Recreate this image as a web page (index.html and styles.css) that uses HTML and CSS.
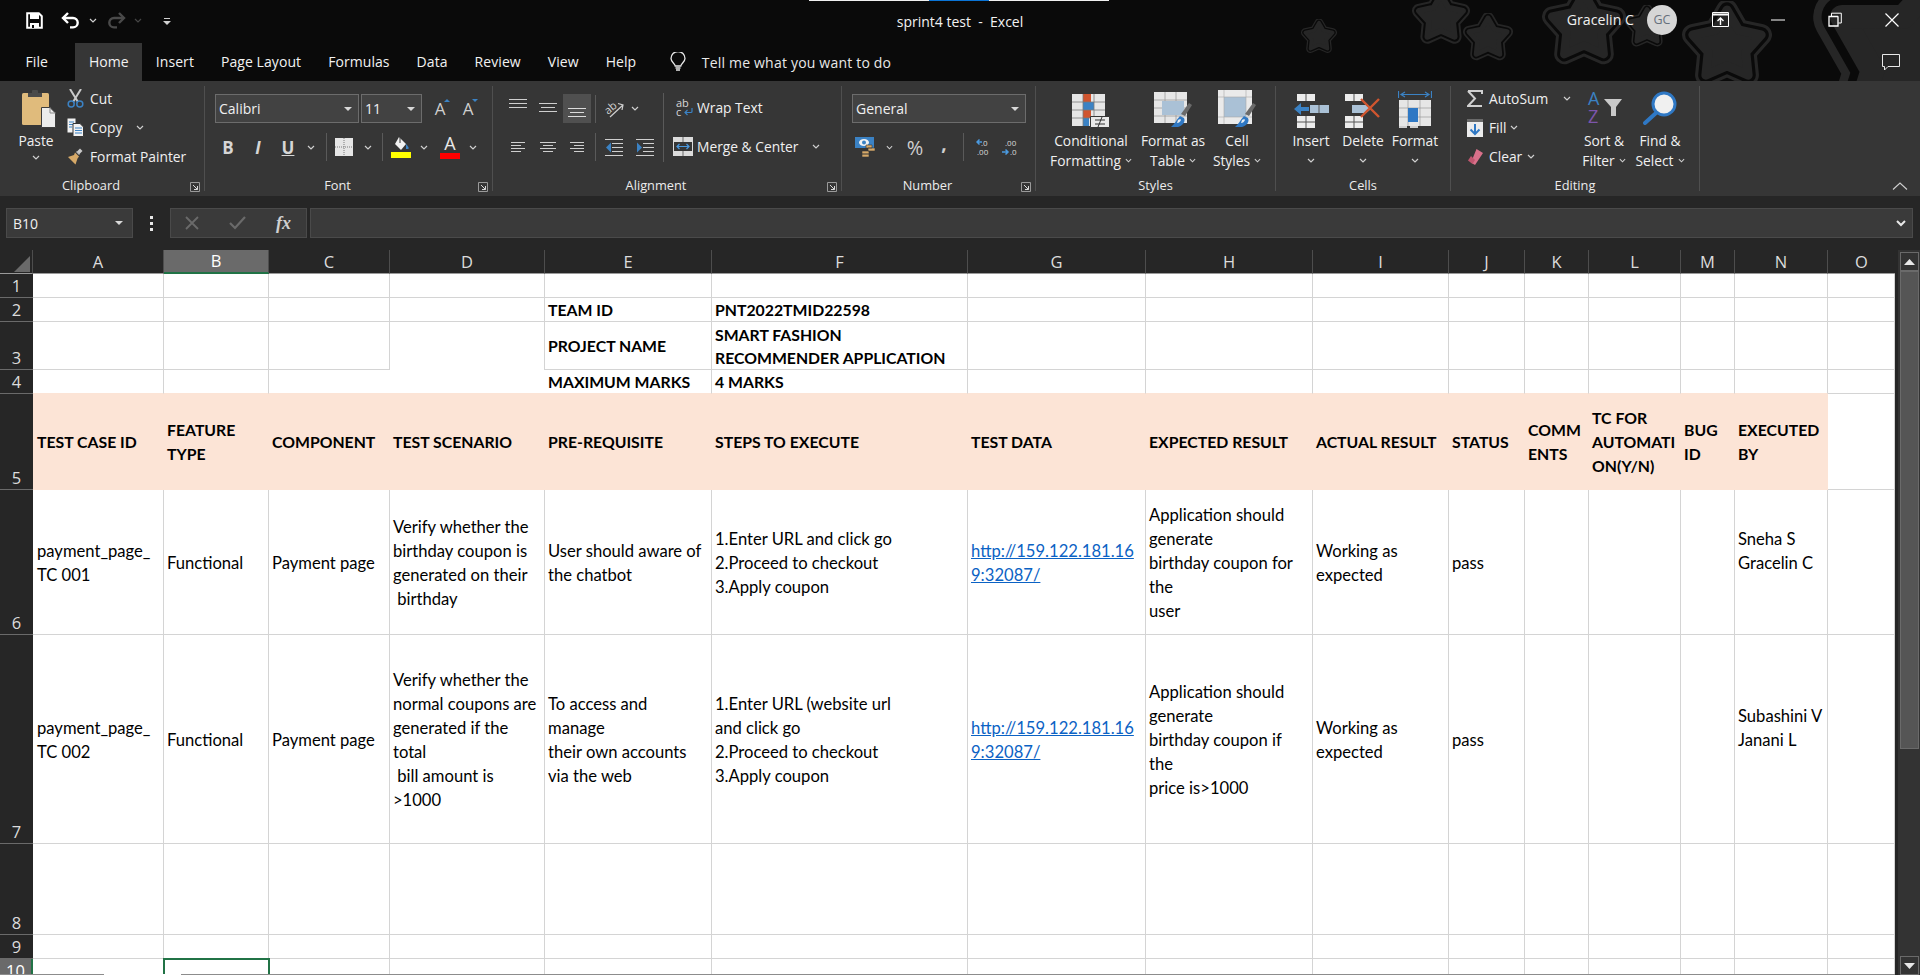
FILE: index.html
```html
<!DOCTYPE html>
<html lang="en">
<head>
<meta charset="utf-8">
<title>sprint4 test - Excel</title>
<link rel="stylesheet" href="styles.css">
</head>
<body>
<svg class="sprite" width="0" height="0">
  <symbol id="chev" viewBox="0 0 8 5"><path d="M1 1l3 3 3-3" fill="none" stroke="#d0d0d0" stroke-width="1.2"/></symbol>
  <symbol id="tri" viewBox="0 0 8 4"><path d="M0 0h8L4 4z" fill="#d8d8d8"/></symbol>
  <symbol id="launch" viewBox="0 0 10 10"><path d="M.5 9.5V.5h9v9z" fill="none" stroke="#9a9a9a"/><path d="M3 3l4.5 4.5M7.5 4v3.5H4" fill="none" stroke="#d8d8d8"/></symbol>
  <symbol id="star" viewBox="0 0 100 100"><g stroke-linejoin="round"><polygon points="50,10 62.9,32.2 88,37.6 70.9,56.8 73.5,82.4 50,72 26.5,82.4 29.1,56.8 12,37.6 37.1,32.2" fill="#262626" stroke="#262626" stroke-width="24"/><polygon points="50,10 62.9,32.2 88,37.6 70.9,56.8 73.5,82.4 50,72 26.5,82.4 29.1,56.8 12,37.6 37.1,32.2" fill="#0a0a0a" stroke="#0a0a0a" stroke-width="17"/><polygon points="50,10 62.9,32.2 88,37.6 70.9,56.8 73.5,82.4 50,72 26.5,82.4 29.1,56.8 12,37.6 37.1,32.2" fill="#262626" stroke="#262626" stroke-width="10"/></g></symbol>
  <symbol id="atop" viewBox="0 0 18 29"><path d="M0 5.5h18M0 9.5h18M0 13.5h18" stroke="#cfcfcf"/></symbol>
  <symbol id="amid" viewBox="0 0 18 29"><path d="M0 9.5h18M2 13.5h14M0 17.5h18" stroke="#cfcfcf"/></symbol>
  <symbol id="abot" viewBox="0 0 18 29"><path d="M0 14.5h18M2 18.5h14M0 22.5h18" stroke="#dcdcdc"/></symbol>
  <symbol id="hleft" viewBox="0 0 16 28"><path d="M1 9.5h14M1 12.5h10M1 15.5h14M1 18.5h10" stroke="#cfcfcf"/></symbol>
  <symbol id="hcen" viewBox="0 0 16 28"><path d="M0 9.5h16M3 12.5h10M0 15.5h16M3 18.5h10" stroke="#cfcfcf"/></symbol>
  <symbol id="hright" viewBox="0 0 16 28"><path d="M1 9.5h14M5 12.5h10M1 15.5h14M5 18.5h10" stroke="#cfcfcf"/></symbol>
</svg>

<div class="chrome">
  <svg class="stars" width="1920" height="81" aria-hidden="true">
    <use href="#star" x="1301" y="19" width="36" height="36"/>
    <use href="#star" x="1412" y="-11" width="58" height="58"/>
    <use href="#star" x="1463" y="13" width="50" height="50"/>
    <use href="#star" x="1542" y="-15" width="84" height="84"/>
    <use href="#star" x="1625" y="5" width="44" height="44"/>
    <use href="#star" x="1682" y="1" width="90" height="90"/>
    <g transform="rotate(12 1925 65)"><use href="#star" x="1805" y="-55" width="240" height="240"/></g>
  </svg>
  <div class="loadbar"><span class="load-seg"></span><span class="load-seg load-blue"></span><span class="load-seg load-end"></span></div>

  <div class="titlebar">
    <div class="qat">
      <svg class="q-save" width="17" height="17" viewBox="0 0 17 17"><path d="M1.2 1.2h11.6l3 3v11.6H1.2z" fill="none" stroke="#fff" stroke-width="2"/><path d="M4 1.5h9v5.5H4z" fill="#fff"/><path d="M4 11h9v5H4z" fill="#fff"/><path d="M6 13h2v3H6z" fill="#0a0a0a"/></svg>
      <svg class="q-undo" width="20" height="17" viewBox="0 0 20 17"><path d="M7 1L2 6l5 5" fill="none" stroke="#fff" stroke-width="2.4"/><path d="M2 6h10a4.6 4.6 0 0 1 0 9.4H9" fill="none" stroke="#fff" stroke-width="2.4"/></svg>
      <svg class="q-chev" width="8" height="5"><use href="#chev"/></svg>
      <svg class="q-redo" width="20" height="17" viewBox="0 0 20 17"><path d="M13 1l5 5-5 5" fill="none" stroke="#4a4a4a" stroke-width="2.4"/><path d="M18 6H8a4.6 4.6 0 0 0 0 9.4h3" fill="none" stroke="#4a4a4a" stroke-width="2.4"/></svg>
      <svg class="q-chev dim" width="8" height="5"><use href="#chev"/></svg>
      <svg class="q-more" width="8" height="8" viewBox="0 0 8 8"><path d="M1 .5h6" stroke="#d0d0d0"/><path d="M0 3h8L4 7z" fill="#d0d0d0"/></svg>
    </div>
    <div class="doc-title">sprint4 test&nbsp; -&nbsp; Excel</div>
    <div class="win">
      <span class="user">Gracelin C</span>
      <span class="avatar">GC</span>
      <span class="win-btn"><svg width="17" height="15" viewBox="0 0 17 15"><path d="M.5.5h16v14H.5z" fill="none" stroke="#fff"/><path d="M.5 2.5h16" stroke="#fff" stroke-width="2"/><path d="M8.5 13V6M5.5 9l3-3 3 3" fill="none" stroke="#fff" stroke-width="1.4"/></svg></span>
      <span class="win-btn"><svg width="14" height="2" viewBox="0 0 14 2"><path d="M0 1h14" stroke="#fff"/></svg></span>
      <span class="win-btn"><svg width="14" height="15" viewBox="0 0 14 15"><path d="M1 4.5h8.5a.7.7 0 0 1 .5.5v9H1z" fill="none" stroke="#fff" stroke-width="1.3"/><path d="M3.5 4V1.2h9.8V11H10.5" fill="none" stroke="#fff"/></svg></span>
      <span class="win-btn"><svg width="14" height="14" viewBox="0 0 14 14"><path d="M.5.5l13 13M13.5.5l-13 13" stroke="#fff" stroke-width="1.2"/></svg></span>
    </div>
  </div>

  <nav class="tabs">
    <span class="tab">File</span>
    <span class="tab tab-on">Home</span>
    <span class="tab">Insert</span>
    <span class="tab">Page Layout</span>
    <span class="tab">Formulas</span>
    <span class="tab">Data</span>
    <span class="tab">Review</span>
    <span class="tab">View</span>
    <span class="tab">Help</span>
    <svg class="bulb" width="16" height="20" viewBox="0 0 16 20"><path d="M5.2 14C5 11.5 1 10 1 6.5a7 7 0 0 1 14 0c0 3.500-4 5-4.200 7.500z" fill="none" stroke="#e8e8e8" stroke-width="1.300"/><path d="M5.500 16h5M6 18h4" stroke="#e8e8e8" stroke-width="1.300"/></svg>
    <span class="tell">Tell me what you want to do</span>
    <svg class="comment" width="18" height="17" viewBox="0 0 18 17"><path d="M.5.5h17v12H6l-3.500 3.500V12.500H.5z" fill="none" stroke="#e8e8e8"/></svg>
  </nav>
</div>

<div class="ribbon">
  <section class="group g-clip">
    <div class="body">
      <div class="paste">
        <svg width="34" height="38" viewBox="0 0 34 38"><rect x="0" y="3" width="27" height="32" rx="1.500" fill="#e0bb7c"/><path d="M6 7V3h4V1a1 1 0 0 1 1-1h4a1 1 0 0 1 1 1v2h4v4z" fill="#4a4a4a"/><path d="M19.500 17.500H28l5.500 5.500v14.500h-14z" fill="#ececec" stroke="#3c3c3c"/><path d="M28 17.500V23h5.500" fill="none" stroke="#8a8a8a"/></svg>
        <span class="paste-t">Paste</span>
        <svg class="paste-c" width="8" height="5"><use href="#chev"/></svg>
      </div>
      <div class="smalls">
        <div class="small"><svg class="si" width="17" height="19" viewBox="0 0 17 19"><path d="M3 0l8 13M14 0L6 13" stroke="#c9c9c9" stroke-width="2"/><circle cx="4.200" cy="15" r="3" fill="none" stroke="#3b82c4" stroke-width="1.500"/><circle cx="12.800" cy="15" r="3" fill="none" stroke="#3b82c4" stroke-width="1.500"/></svg><span>Cut</span></div>
        <div class="small"><svg class="si" width="17" height="19" viewBox="0 0 17 19"><path d="M.5.5h8v14h-8z" fill="#f2f2f2"/><path d="M2 4h5M2 6.500h5M2 9h3" stroke="#3b82c4"/><path d="M6 5.500h7l3.500 3.500v9.500H6z" fill="#f2f2f2" stroke="#363636"/><path d="M8 10h7M8 12.500h7M8 15h7" stroke="#3b82c4"/></svg><span>Copy</span><svg class="after a-copy" width="8" height="5"><use href="#chev"/></svg></div>
        <div class="small"><svg class="si" width="17" height="19" viewBox="0 0 17 19"><path d="M10 4l3 3-1 1-3-3z" fill="#b8b8b8"/><path d="M13 1.500l2.500 2.500-3 3-2.500-2.500z" fill="#c9c9c9"/><path d="M8 5.500l4 4-1.500 2-2 6-7.500-7.500 6-2z" fill="#d6a968"/></svg><span>Format Painter</span></div>
      </div>
    </div>
    <div class="label lab-l">Clipboard</div>
    <svg class="launch" width="10" height="10"><use href="#launch"/></svg>
  </section>

  <section class="group g-font">
    <div class="body column">
      <div class="row1 pad-font1">
        <div class="combo w-font"><span>Calibri</span><svg width="8" height="4"><use href="#tri"/></svg></div>
        <div class="combo w-size"><span>11</span><svg width="8" height="4"><use href="#tri"/></svg></div>
        <span class="t w28 ml4 grow">A<svg class="mini" width="6" height="3" viewBox="0 0 6 3"><path d="M0 3h6L3 0z" fill="#3b82c4"/></svg></span>
        <span class="t w28 shrink">A<svg class="mini" width="6" height="3" viewBox="0 0 6 3"><path d="M0 0h6L3 3z" fill="#3b82c4"/></svg></span>
      </div>
      <div class="row2 pad-font2">
        <span class="t w30 fb">B</span>
        <span class="t w30 fi">I</span>
        <span class="t w30 fu">U</span>
        <span class="t w16"><svg width="8" height="5"><use href="#chev"/></svg></span>
        <span class="sep ml7"></span>
        <span class="t w34"><svg width="18" height="18" viewBox="0 0 18 18"><path d="M0 0h18v18H0z" fill="#e6e6e6"/><path d="M9 0v18M0 9h18" stroke="#7a7a7a" stroke-dasharray="1 1"/></svg></span>
        <span class="t w14"><svg width="8" height="5"><use href="#chev"/></svg></span>
        <span class="sep ml7"></span>
        <span class="t w36"><svg width="20" height="22" viewBox="0 0 20 22"><path d="M8 1l7 7-5 6-6-6z" fill="#f2f2f2"/><path d="M9 1v6" stroke="#363636"/><path d="M15 8c2 2 3 3.500 2.500 5H15z" fill="#3b82c4"/><path d="M0 16h20v6H0z" fill="#ffff00"/></svg></span>
        <span class="t w10"><svg width="8" height="5"><use href="#chev"/></svg></span>
        <span class="t w32 ml5 fcolor">A</span>
        <span class="t w14"><svg width="8" height="5"><use href="#chev"/></svg></span>
      </div>
    </div>
    <div class="label lab-l">Font</div>
    <svg class="launch" width="10" height="10"><use href="#launch"/></svg>
  </section>

  <section class="group g-align">
    <div class="body">
      <div class="al-left">
        <div class="row1 pad-al">
          <span class="t w30"><svg width="18" height="29"><use href="#atop"/></svg></span>
          <span class="t w30"><svg width="18" height="29"><use href="#amid"/></svg></span>
          <span class="t w28 on"><svg width="18" height="29"><use href="#abot"/></svg></span>
          <span class="sep ml4"></span>
          <span class="t w32 ml2"><svg width="19" height="18" viewBox="0 0 19 18"><text x="0" y="11" class="svg-ab" transform="rotate(-40 7 9)">ab</text><path d="M5 17L18 5M13 3.500l5 1.500-1 5" fill="none" stroke="#cfcfcf" stroke-width="1.200"/></svg></span>
          <span class="t w10"><svg width="8" height="5"><use href="#chev"/></svg></span>
        </div>
        <div class="row2 pad-al">
          <span class="t w30"><svg width="16" height="28"><use href="#hleft"/></svg></span>
          <span class="t w30"><svg width="16" height="28"><use href="#hcen"/></svg></span>
          <span class="t w28"><svg width="16" height="28"><use href="#hright"/></svg></span>
          <span class="sep ml4"></span>
          <span class="t w32 ml2"><svg width="18" height="17" viewBox="0 0 18 17"><path d="M0 .5h18M7 4.500h11M7 8.500h11M7 12.500h11M0 16.500h18" stroke="#cfcfcf"/><path d="M6 3.500L1 8.500l5 5v-3.500h0V7z" fill="#3b82c4"/></svg></span>
          <span class="t w30"><svg width="18" height="17" viewBox="0 0 18 17"><path d="M0 .5h18M7 4.500h11M7 8.500h11M7 12.500h11M0 16.500h18" stroke="#cfcfcf"/><path d="M1 3.500l5 5-5 5z" fill="#3b82c4"/></svg></span>
        </div>
      </div>
      <div class="al-right">
        <div class="wm wm-first"><svg class="wm-i" width="20" height="18" viewBox="0 0 20 18"><text x="3" y="8" class="svg-wrap">ab</text><text x="3" y="17" class="svg-wrap">c</text><path d="M19 9v3.500a1 1 0 0 1-1 1h-6M14.500 11L12 13.500l2.500 2.500" fill="none" stroke="#3b82c4" stroke-width="1.200"/></svg><span>Wrap Text</span></div>
        <div class="wm"><svg class="wm-i" width="20" height="19" viewBox="0 0 20 19"><path d="M0 0h20v19H0z" fill="#dcdcdc"/><path d="M1 5h18v9H1z" fill="#363636"/><path d="M4 9.500h12M6.500 7L4 9.500 6.500 12M13.500 7l2.500 2.500-2.500 2.500" fill="none" stroke="#4b9ae0" stroke-width="1.200"/><path d="M10 0v5M10 14v5" stroke="#6a6a6a"/></svg><span>Merge &amp; Center</span><svg class="after a-merge" width="8" height="5"><use href="#chev"/></svg></div>
      </div>
    </div>
    <div class="label lab-l">Alignment</div>
    <svg class="launch" width="10" height="10"><use href="#launch"/></svg>
  </section>

  <section class="group g-num">
    <div class="body column">
      <div class="row1 pad-num1"><div class="combo w-gen"><span>General</span><svg width="8" height="4"><use href="#tri"/></svg></div></div>
      <div class="row2 pad-num2">
        <span class="t w22"><svg width="22" height="20" viewBox="0 0 22 20"><path d="M0 0h19v11H0z" fill="#3b82c4"/><ellipse cx="9" cy="5.500" rx="5" ry="3.500" fill="#f2f2f2"/><circle cx="9" cy="5.500" r="2" fill="#3b82c4"/><path d="M11 8h6v3h-6zM13 11h7v3h-7zM7 14h7v3H7zM7 17h7v3H7z" fill="#d6a968" stroke="#363636" stroke-width=".6"/></svg></span>
        <span class="t w24"><svg width="7" height="5"><use href="#chev"/></svg></span>
        <span class="t w28 pct">%</span>
        <span class="t w30 cma">,</span>
        <span class="sep ml4"></span>
        <span class="t w26 ml6"><svg width="15" height="18" viewBox="0 0 15 18"><text x="5" y="7.500" class="svg-dec">.0</text><text x="1" y="17" class="svg-dec">.00</text><path d="M6 4H1M3.500 1.500L1 4l2.500 2.500" fill="none" stroke="#4b9ae0" stroke-width="1.500"/></svg></span>
        <span class="t w26"><svg width="17" height="18" viewBox="0 0 17 18"><text x="4" y="7.500" class="svg-dec">.00</text><text x="9" y="17" class="svg-dec">.0</text><path d="M1 14h6M4.500 11.500L7 14l-2.500 2.500" fill="none" stroke="#4b9ae0" stroke-width="1.500"/></svg></span>
      </div>
    </div>
    <div class="label lab-l">Number</div>
    <svg class="launch" width="10" height="10"><use href="#launch"/></svg>
  </section>

  <section class="group g-styles">
    <div class="body">
      <div class="big w88">
        <div class="big-i"><svg width="38" height="34" viewBox="0 0 38 34"><path d="M0 0h33v32H0z" fill="#e6e6e6"/><path d="M11 0h8v8h-8z" fill="#d0552f"/><path d="M11 8h11v8H11z" fill="#3b82c4"/><path d="M11 16h8v8h-8z" fill="#d0552f"/><path d="M11 24h6v8h-6z" fill="#3b82c4"/><path d="M11 0v32M22 0v32M0 8h33M0 16h33M0 24h33" stroke="#7a7a7a" stroke-width=".8"/><path d="M18.500 22.500h19v11h-19z" fill="#e9e9e9" stroke="#363636"/><path d="M23 26h10M23 30h10M26 33l4-10" stroke="#333" stroke-width="1"/></svg></div>
        <div class="big-t">Conditional<br>Formatting<svg class="after a-big" width="7" height="5"><use href="#chev"/></svg></div>
      </div>
      <div class="big w76">
        <div class="big-i"><svg width="38" height="36" viewBox="0 0 38 36"><path d="M0 0h33v31H0z" fill="#e6e6e6"/><path d="M0 8h33M11 0v31M22 0v31M0 16h33M0 24h33" stroke="#9a9a9a" stroke-width=".8"/><path d="M8 9h22v14H8z" fill="#aac1d6"/><path d="M35 11l3 2-7 11-4-2z" fill="#6a6a6a"/><path d="M26 24l4 2c2 4-2 8-6 9h-7c4-3 5-7 9-11z" fill="#2f78c4"/><path d="M24 28c1-1 3-1 3 0-1 2-2 3-4 3z" fill="#e8eef4"/></svg></div>
        <div class="big-t">Format as<br>Table<svg class="after a-big" width="7" height="5"><use href="#chev"/></svg></div>
      </div>
      <div class="big w52">
        <div class="big-i"><svg width="38" height="38" viewBox="0 0 38 38"><path d="M0 0h34v34H0z" fill="#eaeaea"/><path d="M6 7h22v20H6z" fill="#aac1d6"/><path d="M6 0v34M28 0v34M0 7h34M0 27h34" stroke="#aaa" stroke-width=".6"/><path d="M35 13l3 2-7 11-4-2z" fill="#6a6a6a"/><path d="M26 26l4 2c2 4-2 8-6 9h-7c4-3 5-7 9-11z" fill="#2f78c4"/><path d="M24 30c1-1 3-1 3 0-1 2-2 3-4 3z" fill="#e8eef4"/></svg></div>
        <div class="big-t">Cell<br>Styles<svg class="after a-big" width="7" height="5"><use href="#chev"/></svg></div>
      </div>
    </div>
    <div class="label">Styles</div>
  </section>

  <section class="group g-cells">
    <div class="body">
      <div class="big w52">
        <div class="big-i"><svg width="36" height="34" viewBox="0 0 36 34"><path d="M4 0h18v7H4zM4 22h18v12H4z" fill="#ececec"/><path d="M13 0v7M13 22v12M4 28h18" stroke="#555"/><path d="M17 11h19v8H17z" fill="#aac1d6"/><path d="M26 11v8" stroke="#555"/><path d="M8 9l-7 6 7 6v-4h8v-4H8z" fill="#3b82c4"/></svg></div>
        <div class="big-t">Insert<br><svg class="paste-c" width="8" height="5"><use href="#chev"/></svg></div>
      </div>
      <div class="big w52">
        <div class="big-i"><svg width="36" height="34" viewBox="0 0 36 34"><path d="M0 0h18v7H0zM0 22h18v12H0z" fill="#ececec"/><path d="M9 0v7M9 22v12M0 28h18" stroke="#555"/><path d="M7 11h14v8H7z" fill="#aac1d6"/><path d="M21 11l5 4-5 4z" fill="#aac1d6"/><path d="M16 5l18 18M34 5L16 23" stroke="#d0552f" stroke-width="2.400"/></svg></div>
        <div class="big-t">Delete<br><svg class="paste-c" width="8" height="5"><use href="#chev"/></svg></div>
      </div>
      <div class="big w52">
        <div class="big-i"><svg width="34" height="37" viewBox="0 0 34 37"><path d="M.5 0v7M33.500 0v7M3 3.500h28M7 1L3 3.500 7 6M27 1l4 2.500L27 6" fill="none" stroke="#3b82c4" stroke-width="1.200"/><path d="M1 9h32v26H1z" fill="#e6e6e6"/><path d="M10 9v26M22 9v26M1 17h32M1 26h32" stroke="#9a9a9a" stroke-width=".7"/><path d="M10 17h10v14H10z" fill="#2f78c4"/><path d="M1 35h8v2H1zM12 35h8v2h-8z" fill="#cfcfcf"/></svg></div>
        <div class="big-t">Format<br><svg class="paste-c" width="8" height="5"><use href="#chev"/></svg></div>
      </div>
    </div>
    <div class="label">Cells</div>
  </section>

  <section class="group g-edit">
    <div class="body">
      <div class="smalls edit-col">
        <div class="small"><svg class="ei" width="16" height="17" viewBox="0 0 16 17"><path d="M1 1h14v3M15 16H1l7-7.500L1 1" fill="none" stroke="#d0d0d0" stroke-width="2"/></svg><span>AutoSum</span><svg class="after a-sum" width="8" height="5"><use href="#chev"/></svg></div>
        <div class="small"><svg class="ei" width="16" height="18" viewBox="0 0 16 18"><path d="M0 0h16v18H0z" fill="#ececec"/><path d="M0 0h16v3H0z" fill="#6a6a6a"/><path d="M8 5v10M3.500 10.500L8 15l4.500-4.500" fill="none" stroke="#2f78c4" stroke-width="2"/></svg><span>Fill</span><svg class="after a-fill" width="8" height="5"><use href="#chev"/></svg></div>
        <div class="small"><svg class="ei" width="16" height="16" viewBox="0 0 16 16"><path d="M9.500 0L16 4l-8 12-4-2.500z" fill="#d9708a"/><path d="M4 7L1 11.500 5.500 15 8 11z" fill="#c0566f"/></svg><span>Clear</span><svg class="after a-clear" width="8" height="5"><use href="#chev"/></svg></div>
      </div>
      <div class="big w56">
        <div class="big-i sort-i"><svg width="36" height="33" viewBox="0 0 36 33"><text x="2" y="13" class="svg-a">A</text><text x="2" y="31" class="svg-z">Z</text><path d="M18 7h18l-6 8v9h-5v-9z" fill="#c9c9c9"/></svg></div>
        <div class="big-t">Sort &amp;<br>Filter<svg class="after a-big" width="7" height="5"><use href="#chev"/></svg></div>
      </div>
      <div class="big w56">
        <div class="big-i sort-i"><svg width="34" height="34" viewBox="0 0 34 34"><circle cx="21" cy="13" r="11" fill="#f0f0f0" stroke="#2f78c4" stroke-width="3"/><path d="M13 22L2 32" stroke="#2f78c4" stroke-width="4" stroke-linecap="round"/></svg></div>
        <div class="big-t">Find &amp;<br>Select<svg class="after a-big" width="7" height="5"><use href="#chev"/></svg></div>
      </div>
    </div>
    <div class="label">Editing</div>
  </section>
  <svg class="collapse" width="16" height="8" viewBox="0 0 16 8"><path d="M1 7.500L8 1l7 6.500" fill="none" stroke="#cfcfcf" stroke-width="1.100"/></svg>
</div>

<div class="formula">
  <div class="namebox"><span>B10</span><svg width="8" height="4"><use href="#tri"/></svg></div>
  <div class="dots"><i></i><i></i><i></i></div>
  <div class="fbtns">
    <svg width="14" height="14" viewBox="0 0 14 14"><path d="M1 1l12 12M13 1L1 13" stroke="#6a6a6a" stroke-width="1.800"/></svg>
    <svg class="fb-ok" width="17" height="14" viewBox="0 0 17 14"><path d="M1 7l5 5L16 1" fill="none" stroke="#6a6a6a" stroke-width="2.200"/></svg>
    <span class="fx">fx</span>
  </div>
  <div class="finput"><svg width="10" height="7" viewBox="0 0 10 7"><path d="M1 1l4 4 4-4" fill="none" stroke="#e8e8e8" stroke-width="2"/></svg></div>
</div>

<div class="sheet">
  <div class="sheet-main">
    <div class="grid-clip">
      <table class="grid">
        <colgroup><col class="c0"><col class="ca"><col class="cb"><col class="cc"><col class="cd"><col class="ce"><col class="cf"><col class="cg"><col class="ch"><col class="ci"><col class="cj"><col class="ck"><col class="cl"><col class="cm"><col class="cn"><col class="co"></colgroup>
        <tr class="h-col"><th class="corner"><svg width="16" height="16" viewBox="0 0 16 16"><path d="M16 0v16H0z" fill="#6a6a6a"/></svg></th><th>A</th><th class="sel-col">B</th><th>C</th><th>D</th><th>E</th><th>F</th><th>G</th><th>H</th><th>I</th><th>J</th><th>K</th><th>L</th><th>M</th><th>N</th><th>O</th></tr>
        <tr class="short r24"><th>1</th><td></td><td></td><td></td><td></td><td></td><td></td><td></td><td></td><td></td><td></td><td></td><td></td><td></td><td></td><td></td></tr>
        <tr class="short r24"><th>2</th><td></td><td></td><td></td><td></td><td class="b">TEAM ID</td><td class="b">PNT2022TMID22598</td><td></td><td></td><td></td><td></td><td></td><td></td><td></td><td></td><td></td></tr>
        <tr class="short r48"><th>3</th><td></td><td></td><td></td><td class="nb"></td><td class="b">PROJECT NAME</td><td class="b">SMART FASHION<br>RECOMMENDER APPLICATION</td><td></td><td></td><td></td><td></td><td></td><td></td><td></td><td></td><td></td></tr>
        <tr class="short r24"><th>4</th><td class="pb"></td><td class="pb"></td><td class="pb nr"></td><td class="pb nr"></td><td class="pb b">MAXIMUM MARKS</td><td class="pb b">4 MARKS</td><td class="pb"></td><td class="pb"></td><td class="pb"></td><td class="pb"></td><td class="pb"></td><td class="pb"></td><td class="pb"></td><td class="pb"></td><td></td></tr>
        <tr class="r96 head"><th>5</th><td>TEST CASE ID</td><td>FEATURE<br>TYPE</td><td>COMPONENT</td><td>TEST SCENARIO</td><td>PRE-REQUISITE</td><td>STEPS TO EXECUTE</td><td>TEST DATA</td><td>EXPECTED RESULT</td><td>ACTUAL RESULT</td><td>STATUS</td><td>COMM<br>ENTS</td><td>TC FOR<br>AUTOMATI<br>ON(Y/N)</td><td>BUG<br>ID</td><td>EXECUTED<br>BY</td><td class="plain"></td></tr>
        <tr class="r145"><th>6</th><td>payment_page_<br>TC 001</td><td>Functional</td><td>Payment page</td><td>Verify whether the<br>birthday coupon is<br>generated on their<br>&nbsp;birthday</td><td>User should aware of<br>the chatbot</td><td>1.Enter URL and click go<br>2.Proceed to checkout<br>3.Apply coupon</td><td><a class="link" href="#">http://159.122.181.16<br>9:32087/</a></td><td>Application should<br>generate<br>birthday coupon for<br>the<br>user</td><td>Working as<br>expected</td><td>pass</td><td></td><td></td><td></td><td>Sneha S<br>Gracelin C<br>&nbsp;</td><td></td></tr>
        <tr class="r209"><th>7</th><td>payment_page_<br>TC 002</td><td>Functional</td><td>Payment page</td><td>Verify whether the<br>normal coupons are<br>generated if the<br>total<br>&nbsp;bill amount is<br>&gt;1000</td><td>To access and<br>manage<br>their own accounts<br>via the web</td><td>1.Enter URL (website url<br>and click go<br>2.Proceed to checkout<br>3.Apply coupon</td><td><a class="link" href="#">http://159.122.181.16<br>9:32087/</a></td><td>Application should<br>generate<br>birthday coupon if<br>the<br>price is&gt;1000</td><td>Working as<br>expected</td><td>pass</td><td></td><td></td><td></td><td>Subashini V<br>Janani L<br>&nbsp;</td><td></td></tr>
        <tr class="r91"><th>8</th><td></td><td></td><td></td><td></td><td></td><td></td><td></td><td></td><td></td><td></td><td></td><td></td><td></td><td></td><td></td></tr>
        <tr class="short r24"><th>9</th><td></td><td></td><td></td><td></td><td></td><td></td><td></td><td></td><td></td><td></td><td></td><td></td><td></td><td></td><td></td></tr>
        <tr class="short r24"><th class="sel-row">10</th><td></td><td class="active"></td><td></td><td></td><td></td><td></td><td></td><td></td><td></td><td></td><td></td><td></td><td></td><td></td><td></td></tr>
      </table>
    </div>
    <div class="tabline"><i class="tl-a"></i><i class="tl-b"></i><i class="tl-c"></i></div>
  </div>
  <div class="vscroll">
    <div class="sb-btn"><svg width="11" height="6" viewBox="0 0 11 6"><path d="M0 6h11L5.500 0z" fill="#e8e8e8"/></svg></div>
    <div class="sb-thumb"></div>
    <div class="sb-track"></div>
    <div class="sb-btn"><svg width="11" height="6" viewBox="0 0 11 6"><path d="M0 0h11L5.500 6z" fill="#e8e8e8"/></svg></div>
  </div>
</div>
</body>
</html>
```

FILE: styles.css
```css
* { box-sizing: border-box; }
html, body { margin: 0; height: 975px; overflow: hidden; background: #262626; }
body { font-family: "Open Sans", "Liberation Sans", sans-serif; font-size: 14px; color: #f0f0f0; width: 1920px; }
.sprite { position: absolute; }
svg { display: block; flex: none; }

/* window chrome */
.chrome { position: relative; background: #0a0a0a; height: 81px; overflow: hidden; }
.stars { position: absolute; left: 0; top: 0; }
.loadbar { position: absolute; left: 809px; top: 0; display: flex; height: 1px; }
.load-seg { width: 120px; background: #f0f0f0; }
.load-blue { background: #0a74d6; width: 60px; }
.load-end { width: 120px; }
.titlebar { position: relative; display: grid; grid-template-columns: 1fr auto 1fr; height: 43px; }
.qat { display: flex; align-items: center; height: 40px; padding-left: 26px; }
.q-undo { margin-left: 18px; }
.q-chev { margin-left: 8px; margin-right: 0; }
.q-redo { margin-left: 9px; }
.dim { opacity: .3; }
.q-more { margin-left: 21px; margin-top: 4px; }
.doc-title { line-height: 44px; color: #f2f2f2; white-space: nowrap; }
.win { display: flex; justify-content: flex-end; align-items: center; height: 39px; }
.user { margin-right: 13px; font-size: 14.2px; }
.avatar { width: 30px; height: 30px; border-radius: 50%; background: #d6d6d6; color: #66707c; font-size: 12.5px; text-align: center; line-height: 30px; margin-right: 15px; }
.win-btn { width: 57px; display: flex; justify-content: center; }
.tabs { position: relative; display: flex; align-items: center; height: 38px; padding-left: 12px; }
.tab { padding: 0 13.5px; line-height: 38px; color: #f2f2f2; letter-spacing: .07px; }
.tab-on { background: #363636; margin-left: 14px; }
.bulb { margin-left: 20px; }
.tell { margin-left: 16px; color: #e8e8e8; letter-spacing: .2px; }
.comment { margin-left: auto; margin-right: 20px; }

/* ribbon */
.ribbon { position: relative; display: flex; height: 115px; background: #363636; padding: 5px 0; font-size: 13.8px; }
.group { position: relative; display: flex; flex-direction: column; height: 105px; border-right: 1px solid #4f4f4f; flex: none; }
.g-clip { width: 205px; }
.g-font { width: 288px; }
.g-align { width: 349px; }
.g-num { width: 194px; }
.g-styles { width: 240px; padding-left: 11px; }
.g-cells { width: 175px; padding-left: 9px; }
.g-edit { width: 249px; padding-left: 16px; }
.body { display: flex; height: 90px; flex: none; }
.column { flex-direction: column; }
.label { line-height: 19px; text-align: center; font-size: 12.8px; color: #ececec; }
.lab-l { padding-right: 22px; }
.g-styles .label { margin-left: -11px; }
.g-cells .label { margin-left: -9px; }
.g-edit .label { margin-left: -16px; }
.launch { position: absolute; right: 4px; bottom: -1px; }

.paste { width: 66px; padding-top: 4px; padding-left: 12px; display: flex; flex-direction: column; align-items: center; flex: none; }
.paste-t { margin: 3px 0 0 -6px; line-height: 20px; }
.paste .paste-c { margin: 4px 0 0 -6px; }
.smalls { display: flex; flex-direction: column; margin-top: -2px; }
.small { display: flex; align-items: center; height: 29px; white-space: nowrap; }
.si { width: 17px; margin-left: 1px; margin-right: 6px; }
.ei { margin-right: 6px; }
.after { display: inline-block; }
.a-copy { margin-left: 14px; }
.a-merge { margin-left: 14px; }
.a-sum { margin-left: 15px; }
.a-fill { margin-left: 3px; }
.a-clear { margin-left: 5px; }
.a-big { margin-left: 4px; vertical-align: 3px; }
.edit-col { width: 109px; flex: none; }

.row1 { display: flex; align-items: center; height: 29px; margin-top: 8px; }
.row2 { display: flex; align-items: center; height: 28px; margin-top: 10px; }
.pad-font1 { padding-left: 10px; }
.pad-font2 { padding-left: 8px; }
.pad-al { padding-left: 10px; }
.pad-num1 { padding-left: 10px; }
.pad-num2 { padding-left: 13px; }
.combo { display: flex; align-items: center; justify-content: space-between; height: 29px; background: #424242; border: 1px solid #6c6c6c; padding: 0 6px 0 3px; font-size: 14px; flex: none; }
.w-font { width: 144px; margin-right: 2px; }
.w-size { width: 61px; padding-left: 3px; }
.w-gen { width: 174px; }
.t { display: flex; align-items: center; justify-content: center; flex: none; height: 28px; position: relative; }
.row1 .t { height: 29px; }
.w10 { width: 10px; } .w14 { width: 14px; } .w16 { width: 16px; } .w22 { width: 22px; } .w24 { width: 24px; } .w26 { width: 26px; } .w28 { width: 28px; } .w30 { width: 30px; } .w32 { width: 32px; } .w34 { width: 34px; } .w36 { width: 36px; }
.ml2 { margin-left: 2px; } .ml4 { margin-left: 4px; } .ml5 { margin-left: 5px; } .ml6 { margin-left: 6px; } .ml7 { margin-left: 7px; }
.sep { width: 1px; height: 28px; background: #5a5a5a; flex: none; }
.on { background: #505050; }
.grow, .shrink { font-size: 17px; color: #cfcfcf; }
.mini { position: absolute; left: 18px; top: 5px; }
.fb, .fi, .fu { font-size: 17px; color: #d6d6d6; font-weight: 700; }
.fi { font-style: italic; }
.fu { text-decoration: underline; }
.fcolor { font-size: 18px; line-height: 20px; color: #e8e8e8; flex-direction: column; justify-content: flex-start; }
.fcolor::after { content: ""; display: block; width: 20px; height: 6px; background: #ff0000; }
.al-left { width: 170px; flex: none; }
.al-right { position: relative; padding-left: 9px; border-left: 1px solid #5a5a5a; height: 69px; margin-top: 7px; flex: none; }
.wm { display: flex; align-items: center; height: 29px; margin-top: 10px; white-space: nowrap; }
.wm-first { margin-top: 0; }
.wm-i { margin-right: 4px; }
.pct { font-size: 20px; color: #cfcfcf; }
.cma { font-size: 19px; font-weight: 700; color: #cfcfcf; padding-bottom: 8px; }

.svg-ab { font: 400 11px "Open Sans", sans-serif; fill: #cfcfcf; }
.svg-wrap { font: 400 11px "Open Sans", sans-serif; fill: #d8d8d8; }
.svg-dec { font: 400 8px "Open Sans", sans-serif; fill: #d8d8d8; }
.svg-a { font: 400 18px "Open Sans", sans-serif; fill: #3b82c4; }
.svg-z { font: 400 18px "Open Sans", sans-serif; fill: #7c55ab; }

.big { display: flex; flex-direction: column; align-items: center; flex: none; }
.w52 { width: 52px; } .w56 { width: 56px; } .w76 { width: 76px; } .w88 { width: 88px; }
.big-i { height: 42px; display: flex; align-items: flex-end; justify-content: center; }
.sort-i { padding-bottom: 3px; }
.big-t { margin-top: 3px; line-height: 20px; text-align: center; white-space: nowrap; }
.big-t .after { display: inline; }
.big-t .paste-c { display: inline; vertical-align: 3px; }
.collapse { position: absolute; right: 12px; bottom: 6px; }

/* formula bar */
.formula { display: flex; align-items: flex-start; height: 54px; padding: 12px 7px 0 6px; background: #262626; }
.namebox { display: flex; align-items: center; justify-content: space-between; width: 127px; height: 30px; background: #3a3a3a; border: 1px solid #4a4a4a; padding: 0 9px 0 6px; font-size: 14px; }
.dots { width: 37px; height: 30px; display: flex; flex-direction: column; align-items: center; justify-content: center; gap: 3px; }
.dots i { width: 3px; height: 3px; background: #e8e8e8; }
.fbtns { display: flex; align-items: center; width: 137px; height: 30px; background: #3a3a3a; border: 1px solid #4a4a4a; padding-left: 14px; }
.fb-ok { margin-left: 30px; }
.fx { margin-left: 30px; font: italic 700 18px "Liberation Serif", serif; color: #d0d0d0; }
.finput { flex: 1; display: flex; align-items: center; justify-content: flex-end; height: 30px; margin-left: 3px; background: #3a3a3a; border: 1px solid #4a4a4a; padding-right: 6px; }

/* sheet */
.sheet { display: flex; height: 725px; background: #fff; }
.sheet-main { width: 1895px; flex: none; display: flex; flex-direction: column; }
.grid-clip { height: 724px; overflow: hidden; }
.grid { table-layout: fixed; border-collapse: separate; border-spacing: 0; width: 1895px; font-family: Lato, "Liberation Sans", sans-serif; font-size: 16.6px; color: #000; }
.c0 { width: 33px; } .ca { width: 131px; } .cb { width: 105px; } .cc { width: 121px; } .cd { width: 155px; } .ce { width: 167px; } .cf { width: 256px; } .cg { width: 178px; } .ch { width: 167px; } .ci { width: 136px; } .cj { width: 76px; } .ck { width: 64px; } .cl { width: 92px; } .cm { width: 54px; } .cn { width: 93px; } .co { width: 67px; }
.r24 { height: 24px; } .r48 { height: 48px; } .r91 { height: 91px; } .r96 { height: 96px; } .r145 { height: 145px; } .r209 { height: 209px; }
.grid td { border-right: 1px solid #d4d4d4; border-bottom: 1px solid #d4d4d4; padding: 1px 0 0 3px; line-height: 24px; white-space: nowrap; overflow: hidden; vertical-align: middle; }
.grid td:nth-child(2) { padding-left: 4px; }
.grid .short td { line-height: 23px; padding-top: 0; }
.grid th { background: #262626; color: #dcdcdc; font: 400 16.5px "Open Sans", sans-serif; padding: 0; border-bottom: 1px solid #6a6a6a; vertical-align: bottom; text-align: center; line-height: 22px; }
.h-col { height: 24px; }
.h-col th { border-right: 1px solid #4d4d4d; border-bottom: 1px solid #9a9a9a; vertical-align: middle; }
.h-col th:last-child { border-right: 0; }
.corner svg { margin: 4px 0 0 14px; }
.sel-col { background: #6a6a6a !important; color: #fff !important; border-bottom: 2px solid #217346 !important; }
.sel-row { background: #6a6a6a !important; border-right: 2px solid #217346; color: #fff !important; }
.grid .b, .head td { font-weight: 700; font-size: 15.8px; }
.grid .nb { border-bottom: 0; }
.grid .nr { border-right: 0; }
.grid .pb { border-bottom-color: #fce4d6; }
.head td { background: #fce4d6; border-color: #fce4d6; }
.grid .head td { border-color: #fce4d6; }
.grid .head td.plain { background: #fff; border-color: #d4d4d4; }
.link { color: #0b62c4; text-decoration: underline; }
.grid .active { outline: 2px solid #217346; outline-offset: -1px; }
.tabline { display: flex; height: 1px; }
.tabline i { display: block; }
.tl-a { width: 104px; background: #8c8c8c; }
.tl-b { width: 77px; background: #fff; }
.tl-c { flex: 1; background: #8c8c8c; }

.vscroll { flex: 1; display: flex; flex-direction: column; align-items: center; background: #333; padding-top: 2px; border-left: 3px solid #262626; }
.sb-btn { width: 19px; height: 19px; background: #333; border: 1px solid #6a6a6a; display: flex; align-items: center; justify-content: center; flex: none; }
.sb-thumb { width: 19px; height: 478px; background: #555; border: 1px solid #6a6a6a; flex: none; }
.sb-track { flex: 1; }
```
